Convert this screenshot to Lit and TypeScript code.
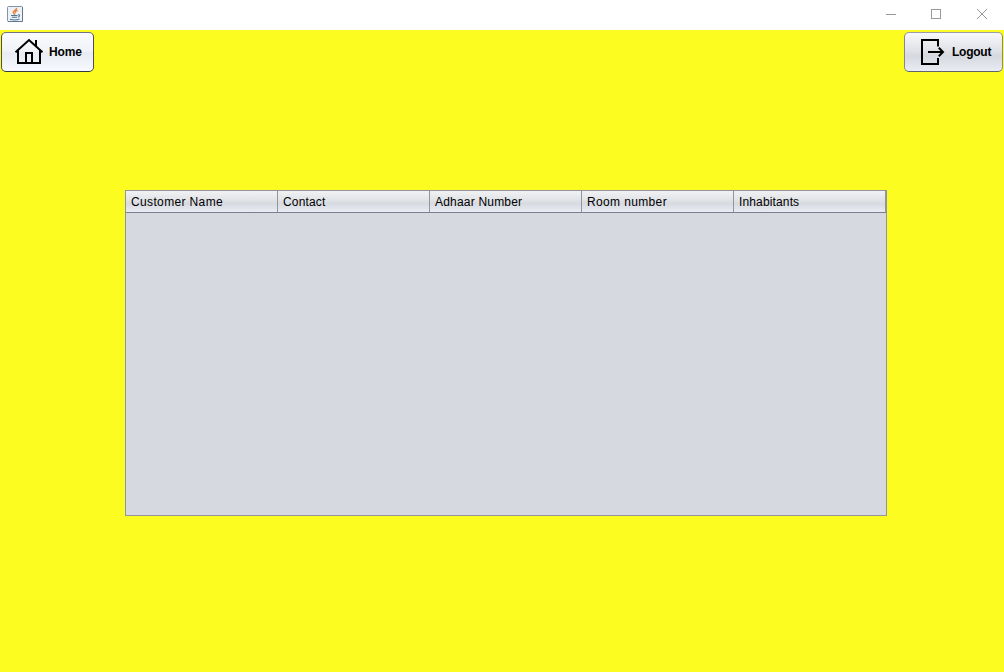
import { LitElement, html, css, svg } from "lit";
import { customElement } from "lit/decorators.js";

const javaIcon = svg`
  <rect x=".5" y=".5" width="15" height="15" rx="1" fill="#eef2f6" stroke="#8095a8"/>
  <path d="M1 15.5H15.5V1" fill="none" stroke="#64798d"/>
  <path d="M9.5 2C10 4 6 4.6 6.3 6.4C6.5 7.4 7.7 7.8 7.6 9M10.5 4.3C8.3 5.2 8 6 8.7 7" fill="none" stroke="#e8843c" stroke-width="1.5"/>
  <path d="M4 9.5H10.5M4.8 11.2H10M11 8.9C13.2 8.3 13.2 10.5 10.8 11.2M3 13.3C6 14.2 10 14.2 12.5 13.1" fill="none" stroke="#4c7899" stroke-width="1.1"/>`;

@customElement("app-root")
export class AppRoot extends LitElement {
  static styles = css`
    :host {
      display: flex;
      flex-direction: column;
      height: 672px;
      background: #fcfc20;
      font: 12px "Liberation Sans", Arial, sans-serif;
      color: #000;
    }
    svg { display: block; flex: none; }
    .titlebar {
      display: flex;
      justify-content: space-between;
      height: 30px;
      box-sizing: border-box;
      padding: 6px 16px 0 7px;
      background: #fff;
    }
    .controls { display: flex; gap: 34px; padding-top: 2px; }
    .toolbar {
      display: flex;
      justify-content: space-between;
      padding: 2px 1px 0;
    }
    .button {
      display: flex;
      align-items: center;
      box-sizing: border-box;
      height: 40px;
      margin: 0;
      border: 1px solid #7d818b;
      border-radius: 5px;
      padding: 0;
      font: bold 12px "Liberation Sans", Arial, sans-serif;
      color: #000;
    }
    .button span { padding-bottom: 1px; }
    .home {
      width: 93px;
      padding-left: 11px;
      gap: 4px;
      border-color: #70747f #4b4e58 #33363e;
      background: linear-gradient(#fbfbfd, #f0f2f7 48%, #e8ebf2 52%, #f7f9fe);
      letter-spacing: -0.1px;
    }
    .logout {
      width: 99px;
      padding-left: 12px;
      gap: 3px;
      border-color: #9a9da6 #85888f #5f636d;
      background: linear-gradient(#f8f8fa, #dfe1e7 48%, #d5d8df 60%, #e9ecf3);
      letter-spacing: -0.25px;
    }
    .table {
      display: flex;
      flex-direction: column;
      box-sizing: border-box;
      width: 762px;
      height: 326px;
      margin: 118px 0 0 125px;
      border: 1px solid #92959e;
      background: #d6d9e0;
    }
    .header {
      display: grid;
      grid-template-columns: repeat(5, 152px);
      height: 22px;
      box-sizing: border-box;
      border-bottom: 1px solid #7b7f8d;
      background: linear-gradient(#f2f2f4, #e0e2e6 45%, #d7dae0 60%, #e9ecf2);
    }
    .cell {
      box-sizing: border-box;
      height: 21px;
      padding: 1px 0 0 5px;
      border-right: 1px solid #92959e;
      line-height: 21px;
      white-space: nowrap;
    }
  `;

  columns = [
    { name: "Customer Name", tracking: 0.36 },
    { name: "Contact", tracking: 0.16 },
    { name: "Adhaar Number", tracking: 0.2 },
    { name: "Room number", tracking: 0.36 },
    { name: "Inhabitants", tracking: 0.14 },
  ];

  render() {
    return html`
      <div class="titlebar">
        <svg width="16" height="16" viewBox="0 0 16 16">${javaIcon}</svg>
        <div class="controls">
          <svg width="12" height="12" viewBox="0 0 12 12"><path d="M2 6.5H12" stroke="#999" shape-rendering="crispEdges"/></svg>
          <svg width="12" height="12" viewBox="0 0 12 12"><path d="M1.5 1.5H10.5V10.5H1.5Z" fill="none" stroke="#999" shape-rendering="crispEdges"/></svg>
          <svg width="12" height="12" viewBox="0 0 12 12"><path d="M1 1L11 11M11 1L1 11" stroke="#999"/></svg>
        </div>
      </div>
      <div class="toolbar">
        <button class="button home">
          <svg width="32" height="32" viewBox="0 0 32 32" fill="none" stroke="#000" stroke-width="2">
            <path d="M2.5 16.2L16 4L29.5 16.2M23 4V10M5 14V27H27V14M13 27V17H19V27"/>
          </svg>
          <span>Home</span>
        </button>
        <button class="button logout">
          <svg width="32" height="32" viewBox="0 0 32 32" fill="none" stroke="#000" stroke-width="2">
            <path d="M21 10.5V4H5V28H21V22M11 16H26M21.8 11.8L26 16L21.8 20.2"/>
          </svg>
          <span>Logout</span>
        </button>
      </div>
      <div class="table">
        <div class="header">
          ${this.columns.map(
            (c) => html`<div class="cell" style="letter-spacing:${c.tracking}px">${c.name}</div>`
          )}
        </div>
      </div>
    `;
  }
}
